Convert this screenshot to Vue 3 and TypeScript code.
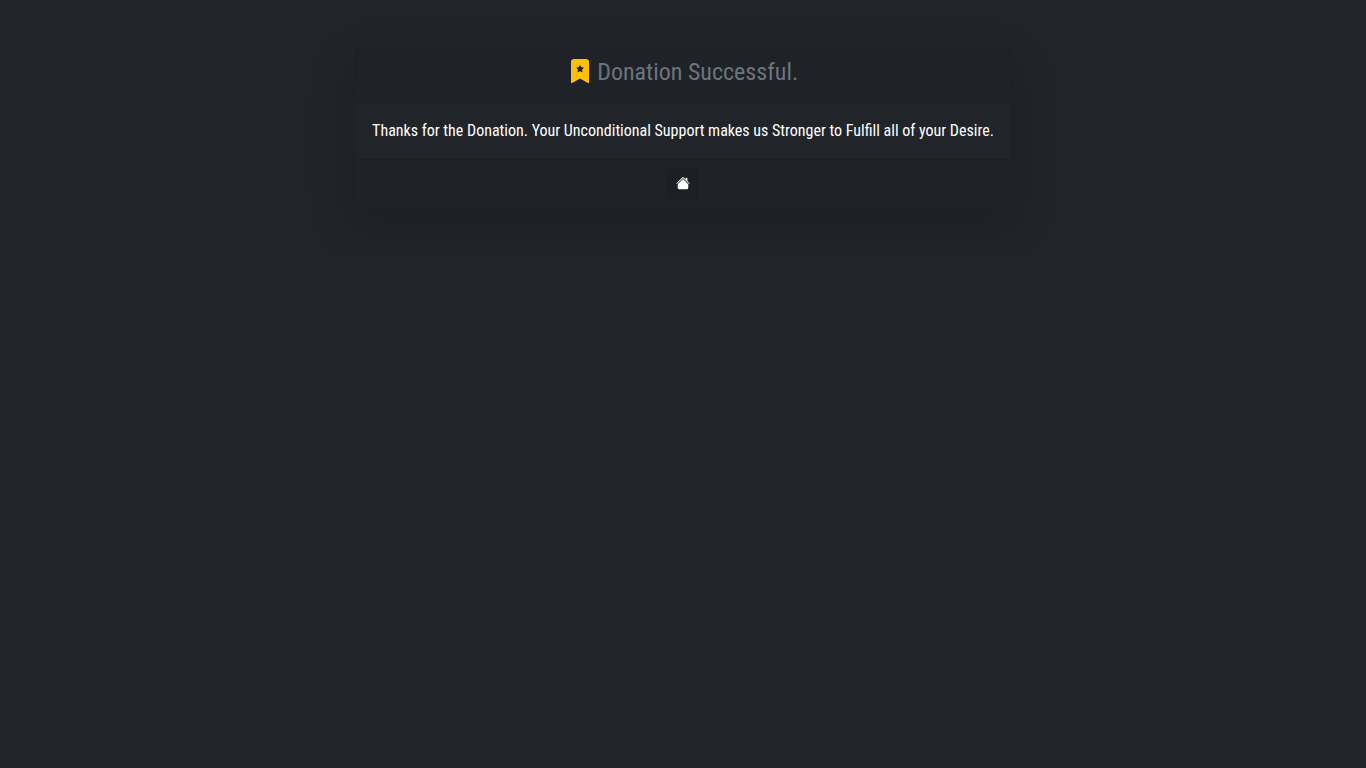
<script setup lang="ts">
const title: string = 'Donation Successful.'
const message: string =
  'Thanks for the Donation. Your Unconditional Support makes us Stronger to Fulfill all of your Desire.'
</script>

<template>
  <main class="page">
    <section class="card">
      <header class="card-header">
        <h4 class="title">
          <svg class="bookmark" viewBox="0 0 16 16" fill="currentColor" aria-hidden="true">
            <path
              fill-rule="evenodd"
              d="M2 15.5V2a2 2 0 0 1 2-2h8a2 2 0 0 1 2 2v13.5a.5.5 0 0 1-.74.439L8 13.069l-5.26 2.87A.5.5 0 0 1 2 15.5zM8.16 4.1a.178.178 0 0 0-.32 0l-.634 1.285a.178.178 0 0 1-.134.098l-1.42.206a.178.178 0 0 0-.098.303L6.58 6.993c.042.041.061.1.051.158L6.39 8.565a.178.178 0 0 0 .258.187l1.27-.668a.178.178 0 0 1 .165 0l1.27.668a.178.178 0 0 0 .257-.187L9.368 7.15a.178.178 0 0 1 .05-.158l1.028-1.001a.178.178 0 0 0-.098-.303l-1.42-.206a.178.178 0 0 1-.134-.098L8.16 4.1z"
            />
          </svg>
          {{ title }}
        </h4>
      </header>
      <div class="card-body">
        <p class="message">{{ message }}</p>
      </div>
      <footer class="card-footer">
        <button class="home" type="button" aria-label="Home">
          <svg class="house" viewBox="0 0 16 16" fill="currentColor" aria-hidden="true">
            <path
              fill-rule="evenodd"
              d="m8 3.293 6 6V13.5a1.5 1.5 0 0 1-1.5 1.5h-9A1.5 1.5 0 0 1 2 13.5V9.293l6-6zm5-.793V6l-2-2V2.5a.5.5 0 0 1 .5-.5h1a.5.5 0 0 1 .5.5z"
            />
            <path
              fill-rule="evenodd"
              d="M7.293 1.5a1 1 0 0 1 1.414 0l6.647 6.646a.5.5 0 0 1-.708.708L8 2.207 1.354 8.854a.5.5 0 1 1-.708-.708L7.293 1.5z"
            />
          </svg>
        </button>
      </footer>
    </section>
  </main>
</template>

<style>
body {
  margin: 0;
  background: #212529;
}
</style>

<style scoped>
.page {
  display: flex;
  justify-content: center;
  padding: 48px 16px;
  font-family: 'Roboto Condensed', Roboto, 'Liberation Sans', sans-serif;
  font-size: 16px;
  line-height: 24px;
  color: #fff;
}

.card {
  border: 1px solid rgba(0, 0, 0, 0.125);
  border-radius: 4px;
  background: #212529;
  box-shadow: 0 16px 48px rgba(0, 0, 0, 0.175);
  text-align: center;
}

.card-header {
  padding: 8px 16px;
  border-bottom: 1px solid rgba(0, 0, 0, 0.125);
  background: rgba(0, 0, 0, 0.03);
}

.title {
  margin: 0 0 6px;
  font-size: 24px;
  font-weight: 400;
  line-height: 31px;
  color: #6c757d;
}

.bookmark {
  width: 24px;
  height: 24px;
  vertical-align: -3px;
  color: #ffc107;
}

.card-body {
  padding: 16px;
}

.message {
  margin: 0;
}

.card-footer {
  display: flex;
  justify-content: center;
  padding: 8px 16px;
  border-top: 1px solid rgba(0, 0, 0, 0.125);
  background: rgba(0, 0, 0, 0.03);
}

.home {
  padding: 4px 8px;
  border: 1px solid #1c1f23;
  border-radius: 3px;
  background: #1c1f23;
  font-family: inherit;
  font-size: 14px;
  line-height: 21px;
  color: #fff;
  cursor: pointer;
}

.house {
  width: 14px;
  height: 14px;
  vertical-align: -2px;
}
</style>
